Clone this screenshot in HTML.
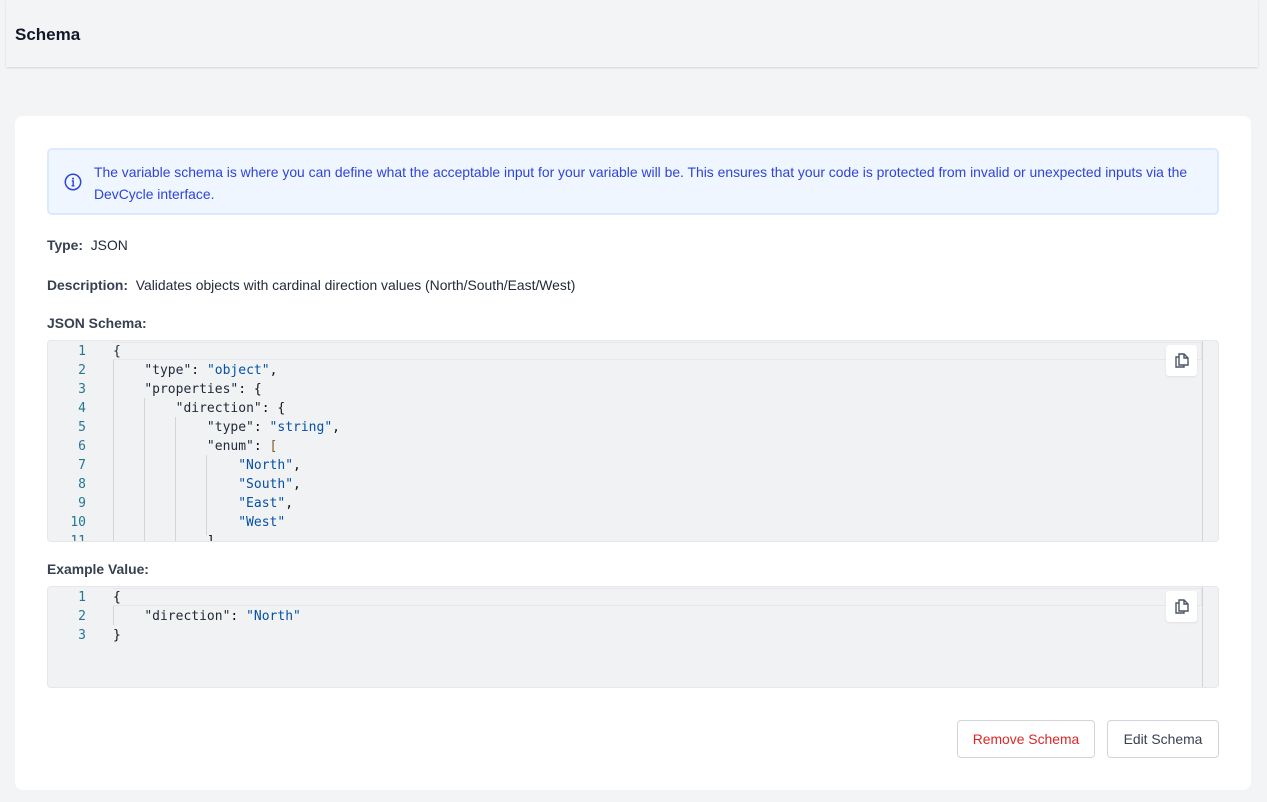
<!DOCTYPE html>
<html><head><meta charset="utf-8"><style>
*{box-sizing:border-box;margin:0;padding:0}
body{width:1267px;height:802px;background:#f3f4f6;font-family:"Liberation Sans",sans-serif;color:#1f2937;position:relative;overflow:hidden}
.hdr{position:absolute;left:6px;top:0;width:1252px;height:67px;background:#f3f4f6;box-shadow:0 1px 2px rgba(0,0,0,.12);}
.hdr h1{position:absolute;left:9px;top:25px;font-size:17px;font-weight:bold;color:#111827}
.card{position:absolute;left:15px;top:116px;width:1236px;height:674px;background:#fff;border-radius:8px}
.info{position:absolute;left:47px;top:148px;width:1172px;height:67px;background:#eff6ff;border:2px solid #dbeafe;border-radius:5px;color:#2f44d6;font-size:13.9px;line-height:22px;padding:11px 20px 0 45px}
.info svg{position:absolute;left:15px;top:23px}
.lbl{position:absolute;left:47px;font-size:13.9px;color:#1f2937}
.lbl b{color:#374151}
.ed{position:absolute;left:47px;width:1172px;background:#f1f2f4;border:1px solid #e5e7eb;border-radius:4px;overflow:hidden;font-family:"DejaVu Sans Mono",monospace;font-size:13px}
.ed .sb{position:absolute;right:0;top:0;bottom:0;width:16px;border-left:1px solid #d1d5db}
.ed .first{position:absolute;left:65px;right:16px;top:1px;height:18px;border:1px solid #e5e7eb;border-left:none}
.ln{position:absolute;left:0;width:38px;text-align:right;color:#237893;}
.cd{position:absolute;left:65px;color:#111;white-space:pre}
.k{color:#1f2937}.s{color:#0451a5}
.gd{position:absolute;width:1px;background:#d4d4d4}
.cp{position:absolute;right:21px;top:4px;width:31px;height:31px;background:#fff;border-radius:3px;box-shadow:0 1px 2px rgba(0,0,0,.08)}
.btn{position:absolute;top:720px;height:38px;border:1px solid #d1d5db;border-radius:4px;background:#fff;font-size:13.9px;text-align:center;line-height:36px}
</style></head><body>
<div class="hdr"><h1>Schema</h1></div>
<div class="card"></div>
<div class="info"><svg width="18" height="18" viewBox="0 0 18 18"><circle cx="9" cy="9" r="7.7" fill="none" stroke="#2f44d6" stroke-width="1.5"/><circle cx="9" cy="5.6" r="1" fill="#2f44d6"/><path d="M7.8 8h1.4v4.8M7.6 12.8h2.8" stroke="#2f44d6" stroke-width="1.4" fill="none"/></svg>The variable schema is where you can define what the acceptable input for your variable will be. This ensures that your code is protected from invalid or unexpected inputs via the DevCycle interface.</div>
<div class="lbl" style="top:237px"><b>Type:</b>&nbsp; JSON</div>
<div class="lbl" style="top:277px"><b>Description:</b>&nbsp; Validates objects with cardinal direction values (North/South/East/West)</div>
<div class="lbl" style="top:315px"><b>JSON Schema:</b></div>
<div class="ed" style="top:340px;height:202px">
<div class="first"></div>
<div class="gd" style="left:65px;top:19px;height:190px"></div>
<div class="gd" style="left:96px;top:57px;height:150px"></div>
<div class="gd" style="left:127px;top:76px;height:130px"></div>
<div class="gd" style="left:158px;top:114px;height:80px"></div>
<div style="position:absolute;top:1px;left:0;right:0;line-height:19px">
<div class="ln" style="top:0">1<br>2<br>3<br>4<br>5<br>6<br>7<br>8<br>9<br>10<br>11</div>
<div class="cd" style="top:0"><span class="k">{</span>
    <span class="k">"type"</span>: <span class="s">"object"</span>,
    <span class="k">"properties"</span>: {
        <span class="k">"direction"</span>: {
            <span class="k">"type"</span>: <span class="s">"string"</span>,
            <span class="k">"enum"</span>: <span style="color:#795e26">[</span>
                <span class="s">"North"</span>,
                <span class="s">"South"</span>,
                <span class="s">"East"</span>,
                <span class="s">"West"</span>
            ]</div></div>
<div class="sb"></div>
<div class="cp"><svg width="31" height="31" viewBox="0 0 31 31"><path d="M13 9h5l4 4v7h-9z M18 9v4h4" fill="none" stroke="#4b5563" stroke-width="1.4"/><path d="M13 12h-3v10h8v-2" fill="none" stroke="#4b5563" stroke-width="1.4"/></svg></div>
</div>
<div class="lbl" style="top:561px"><b>Example Value:</b></div>
<div class="ed" style="top:586px;height:102px">
<div class="first"></div>
<div class="gd" style="left:65px;top:19px;height:19px"></div>
<div style="position:absolute;top:1px;left:0;right:0;line-height:19px">
<div class="ln">1<br>2<br>3</div>
<div class="cd">{
    <span class="k">"direction"</span>: <span class="s">"North"</span>
}</div></div>
<div class="sb"></div>
<div class="cp"><svg width="31" height="31" viewBox="0 0 31 31"><path d="M13 9h5l4 4v7h-9z M18 9v4h4" fill="none" stroke="#4b5563" stroke-width="1.4"/><path d="M13 12h-3v10h8v-2" fill="none" stroke="#4b5563" stroke-width="1.4"/></svg></div>
</div>
<div class="btn" style="left:957px;width:138px;color:#dc2626">Remove Schema</div>
<div class="btn" style="left:1107px;width:112px;color:#374151">Edit Schema</div>
</body></html>
